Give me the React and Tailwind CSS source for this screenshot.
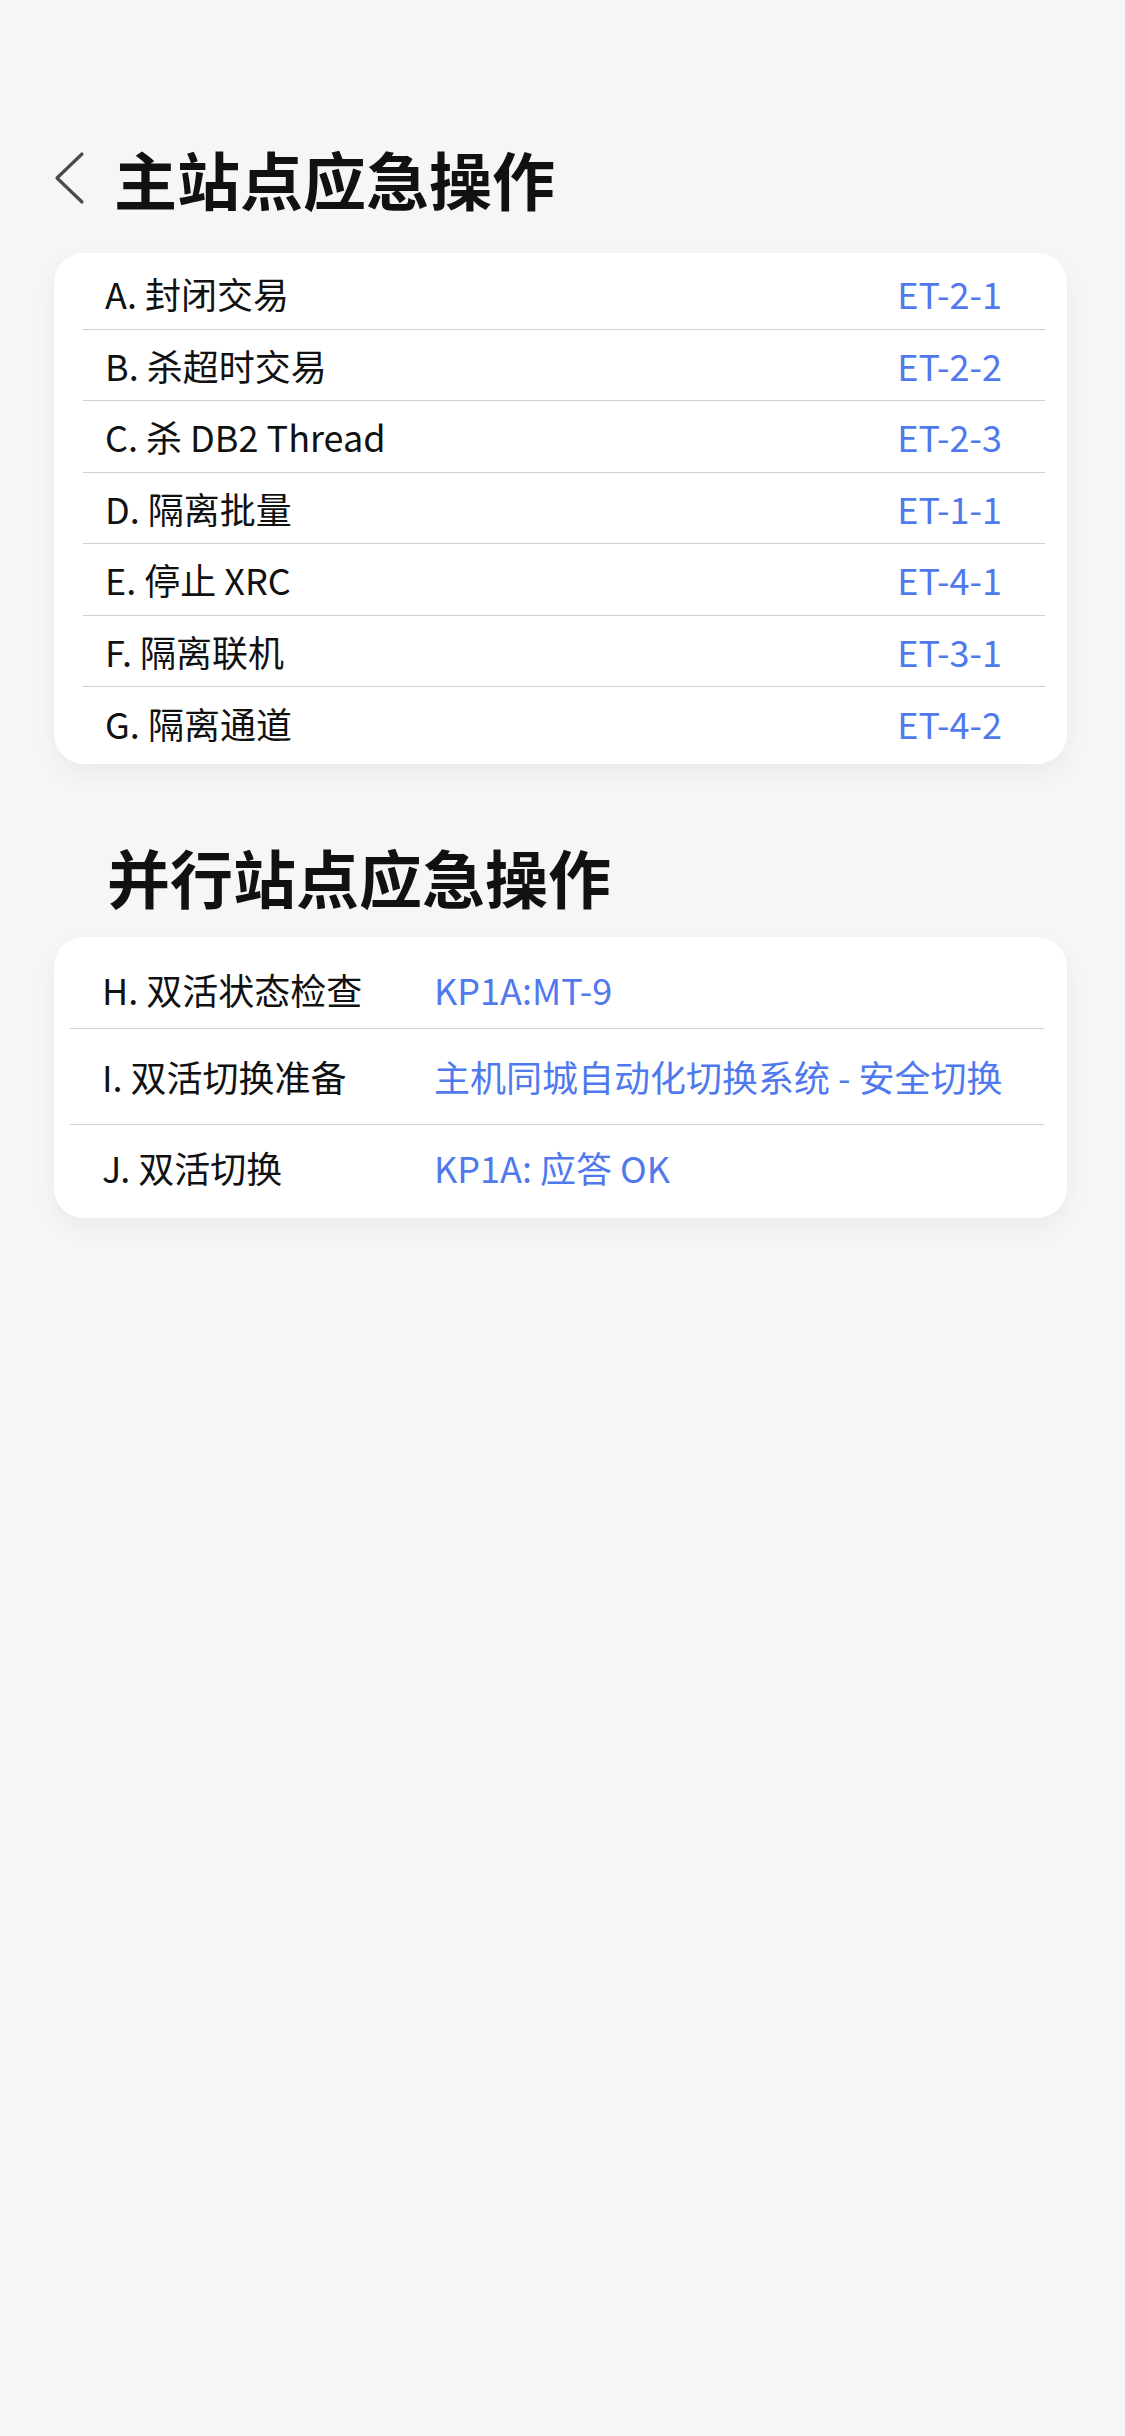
import React from 'react';

const mainOps = [
  { label: 'A. 封闭交易', code: 'ET-2-1' },
  { label: 'B. 杀超时交易', code: 'ET-2-2' },
  { label: 'C. 杀 DB2 Thread', code: 'ET-2-3' },
  { label: 'D. 隔离批量', code: 'ET-1-1' },
  { label: 'E. 停止 XRC', code: 'ET-4-1' },
  { label: 'F. 隔离联机', code: 'ET-3-1' },
  { label: 'G. 隔离通道', code: 'ET-4-2' },
];

const parallelOps = [
  { label: 'H. 双活状态检查', value: 'KP1A:MT-9', row: 'h-[92px] pt-[14px]' },
  { label: 'I. 双活切换准备', value: '主机同城自动化切换系统 - 安全切换', row: 'h-[96px]' },
  { label: 'J. 双活切换', value: 'KP1A: 应答 OK', row: 'h-[93px] pb-[8px]' },
];

const font = { fontFamily: '"Noto Sans CJK SC", "Noto Sans", sans-serif' };

const App = () => {
  return (
    <div className="min-h-screen w-full bg-[#f5f6f8] text-[#111]" style={font}>
      <div className="pl-[54px] pr-[58px] pt-[138px]">
        {/* Header */}
        <div className="flex h-[80px] items-center">
          <svg width="32" height="54" viewBox="0 0 32 54" className="shrink-0">
            <path d="M28 3 L3 27 L28 51" fill="none" stroke="#4a4a4a" strokeWidth="3.2" strokeLinecap="round" strokeLinejoin="round" />
          </svg>
          <h1 className="ml-[28px] text-[63px] font-bold leading-[80px] tracking-normal">主站点应急操作</h1>
        </div>

        {/* Main site card */}
        <div className="mt-[35px] rounded-[30px] bg-white py-[5px] shadow-[0_10px_24px_rgba(0,0,0,0.05)]">
          <div className="ml-[29px] mr-[22px]">
            {mainOps.map((op, i) => (
              <div
                key={op.code}
                className={`flex h-[71.5px] items-center justify-between pl-[22px] pr-[43px] ${i < mainOps.length - 1 ? 'border-b border-[#cfcfcf]' : ''}`}
              >
                <span className="text-[36px] leading-none">{op.label}</span>
                <span className="text-[36px] leading-none text-[#5079ee]">{op.code}</span>
              </div>
            ))}
          </div>
        </div>

        {/* Parallel site title */}
        <h2 className="mt-[72px] pl-[53px] text-[63px] font-bold leading-[80px]">并行站点应急操作</h2>

        {/* Parallel site card */}
        <div className="mt-[21px] rounded-[30px] bg-white shadow-[0_10px_24px_rgba(0,0,0,0.05)]">
          <div className="ml-[16px] mr-[23px]">
            {parallelOps.map((op, i) => (
              <div
                key={op.label}
                className={`flex items-center pl-[32px] ${op.row} ${i < parallelOps.length - 1 ? 'border-b border-[#cfcfcf]' : ''}`}
              >
                <span className="w-[332px] shrink-0 text-[36px] leading-none">{op.label}</span>
                <span className="whitespace-nowrap text-[36px] leading-none text-[#5079ee]">{op.value}</span>
              </div>
            ))}
          </div>
        </div>
      </div>
    </div>
  );
};

export default App;
